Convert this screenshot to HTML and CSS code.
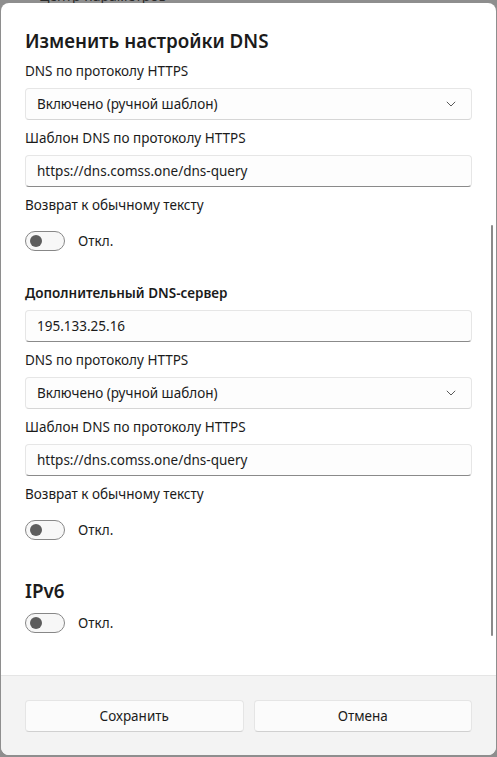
FILE: index.html
```html
<!DOCTYPE html>
<html lang="ru">
<head>
<meta charset="utf-8">
<link rel="stylesheet" href="styles.css">
</head>
<body>
<div class="backdrop-text">&lt;&nbsp;&nbsp;&nbsp;Центр параметров</div>
<div class="dialog">
  <div class="content">
    <h1 class="title">Изменить настройки DNS</h1>
    <div class="label">DNS по протоколу HTTPS</div>
    <div class="box select">
      <span>Включено (ручной шаблон)</span>
      <svg class="chev" width="10" height="6" viewBox="0 0 10 6"><path d="M0.8 0.8 L5 5 L9.2 0.8" fill="none" stroke="#5a5a5a" stroke-width="1"/></svg>
    </div>
    <div class="label">Шаблон DNS по протоколу HTTPS</div>
    <div class="box input">https://dns.comss.one/dns-query</div>
    <div class="label">Возврат к обычному тексту</div>
    <div class="toggle-row"><span class="toggle"><span class="knob"></span></span><span class="toggle-text">Откл.</span></div>

    <div class="label bold">Дополнительный DNS-сервер</div>
    <div class="box input">195.133.25.16</div>
    <div class="label">DNS по протоколу HTTPS</div>
    <div class="box select">
      <span>Включено (ручной шаблон)</span>
      <svg class="chev" width="10" height="6" viewBox="0 0 10 6"><path d="M0.8 0.8 L5 5 L9.2 0.8" fill="none" stroke="#5a5a5a" stroke-width="1"/></svg>
    </div>
    <div class="label">Шаблон DNS по протоколу HTTPS</div>
    <div class="box input">https://dns.comss.one/dns-query</div>
    <div class="label">Возврат к обычному тексту</div>
    <div class="toggle-row"><span class="toggle"><span class="knob"></span></span><span class="toggle-text">Откл.</span></div>

    <h2 class="subtitle">IPv6</h2>
    <div class="toggle-row tight"><span class="toggle"><span class="knob"></span></span><span class="toggle-text">Откл.</span></div>
  </div>
  <div class="scrollbar"></div>
  <div class="footer">
    <button class="btn">Сохранить</button>
    <button class="btn">Отмена</button>
  </div>
</div>
</body>
</html>
```
FILE: styles.css
```css
html, body {
  margin: 0;
  padding: 0;
}
body {
  width: 497px;
  height: 757px;
  background: #8e8e8e;
  overflow: hidden;
  position: relative;
  font-family: "Noto Sans", "Open Sans", sans-serif;
  color: #1b1b1b;
}
.backdrop-text {
  position: absolute;
  top: -12px;
  left: 20px;
  font-size: 14px;
  color: #2a2a2a;
  line-height: 16px;
}
.dialog {
  position: relative;
  margin: 3px 0 0 1px;
  width: 495px;
  height: 752px;
  background: #ffffff;
  border-radius: 8px;
  overflow: hidden;
  display: flex;
  flex-direction: column;
}
.content {
  flex: 1;
  padding: 24px 24px 0 24px;
  display: flex;
  flex-direction: column;
  border-bottom: 1px solid #e5e5e5;
}
.title {
  margin: 0 0 6px 0;
  font-size: 18.8px;
  line-height: 28px;
  font-weight: 600;
}
.label {
  font-size: 13.5px;
  line-height: 20px;
  margin-bottom: 7px;
}
.label.bold {
  font-weight: 600;
  margin-top: 22px;
}
.box {
  box-sizing: border-box;
  height: 32px;
  border: 1px solid #e6e6e6;
  border-radius: 4px;
  background: #fdfdfd;
  font-size: 13.5px;
  padding: 0 11px;
  display: flex;
  align-items: center;
  margin-bottom: 8px;
}
.box.select {
  justify-content: space-between;
  border-bottom-color: #d6d6d6;
  padding-right: 15px;
}
.box.input {
  border-bottom: 1px solid #8a8a8a;
}
.toggle-row {
  display: flex;
  align-items: center;
  height: 20px;
  margin-top: 9px;
  margin-bottom: 10px;
}
.toggle-row.tight {
  margin-top: 8px;
}
.toggle {
  box-sizing: border-box;
  width: 40px;
  height: 20px;
  border: 1px solid #878787;
  border-radius: 10px;
  background: #f7f7f7;
  display: flex;
  align-items: center;
  padding-left: 4px;
}
.knob {
  width: 12px;
  height: 12px;
  border-radius: 50%;
  background: #5d5d5d;
}
.toggle-text {
  margin-left: 13px;
  font-size: 13.5px;
}
.subtitle {
  margin: 27px 0 0 0;
  font-size: 18.8px;
  line-height: 28px;
  font-weight: 600;
}
.scrollbar {
  position: absolute;
  right: 3px;
  top: 222px;
  width: 2px;
  height: 411px;
  background: #8a8a8a;
  border-radius: 1px;
}
.footer {
  height: 79px;
  flex: none;
  background: #f3f3f3;
  box-sizing: border-box;
  padding: 24px 24px 0 24px;
  display: flex;
  gap: 10px;
}
.btn {
  flex: 1;
  height: 32px;
  border: 1px solid #e5e5e5;
  border-bottom-color: #d0d0d0;
  border-radius: 4px;
  background: #fbfbfb;
  font-family: "Noto Sans", "Open Sans", sans-serif;
  font-size: 13.5px;
  color: #1b1b1b;
  padding: 0;
}
```
